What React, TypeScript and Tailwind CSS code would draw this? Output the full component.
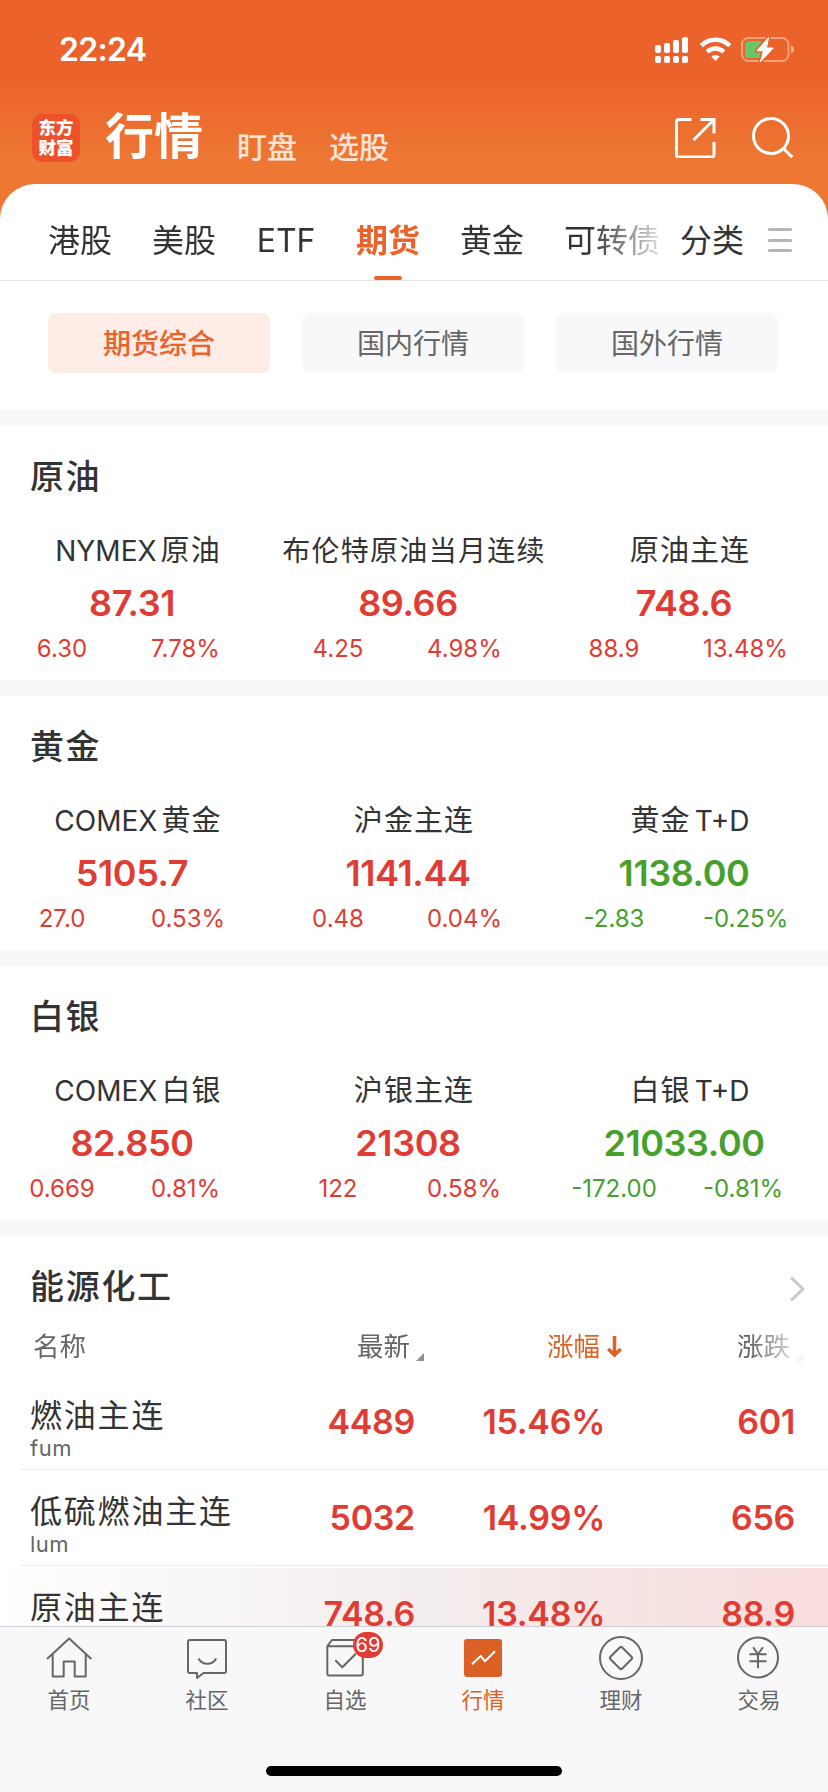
import type { ReactNode } from "react";

type Quote = {
  latin?: string;
  name: string;
  suffix?: string;
  value: string;
  change: string;
  percent: string;
  down?: boolean;
};

type Section = {
  title: string;
  quotes: Quote[];
};

const sections: Section[] = [
  {
    title: "原油",
    quotes: [
      { latin: "NYMEX", name: "原油", value: "87.31", change: "6.30", percent: "7.78%" },
      { name: "布伦特原油当月连续", value: "89.66", change: "4.25", percent: "4.98%" },
      { name: "原油主连", value: "748.6", change: "88.9", percent: "13.48%" },
    ],
  },
  {
    title: "黄金",
    quotes: [
      { latin: "COMEX", name: "黄金", value: "5105.7", change: "27.0", percent: "0.53%" },
      { name: "沪金主连", value: "1141.44", change: "0.48", percent: "0.04%" },
      { name: "黄金", suffix: "T+D", value: "1138.00", change: "-2.83", percent: "-0.25%", down: true },
    ],
  },
  {
    title: "白银",
    quotes: [
      { latin: "COMEX", name: "白银", value: "82.850", change: "0.669", percent: "0.81%" },
      { name: "沪银主连", value: "21308", change: "122", percent: "0.58%" },
      { name: "白银", suffix: "T+D", value: "21033.00", change: "-172.00", percent: "-0.81%", down: true },
    ],
  },
];

const energyRows = [
  { name: "燃油主连", code: "fum", price: "4489", percent: "15.46%", change: "601" },
  { name: "低硫燃油主连", code: "lum", price: "5032", percent: "14.99%", change: "656" },
  { name: "原油主连", price: "748.6", percent: "13.48%", change: "88.9", flash: true },
];

function StatusBar() {
  return (
    <div className="flex h-[98px] items-center justify-between pl-[59px] pr-[34px] text-white">
      <span className="mt-px text-[32px] font-semibold leading-none tracking-[-0.7px]">22:24</span>
      <svg className="h-[28px] w-[139px]" viewBox="0 0 139 28" fill="none">
        <g fill="#fff">
          <rect x="0" y="10" width="6" height="8" rx="2" />
          <rect x="9" y="8" width="6" height="10" rx="2" />
          <rect x="18" y="5" width="6" height="13" rx="2" />
          <rect x="27" y="2" width="6" height="16" rx="2" />
          <rect x="0" y="21" width="6" height="7" rx="2" />
          <rect x="9" y="21" width="6" height="7" rx="2" />
          <rect x="18" y="21" width="6" height="7" rx="2" />
          <rect x="27" y="21" width="6" height="7" rx="2" />
        </g>
        <path d="M46.3 10.6a20.3 20.3 0 0 1 28.400 0" stroke="#fff" strokeWidth="4.6" />
        <path d="M52.2 16.9a12 12 0 0 1 16.600 0" stroke="#fff" strokeWidth="4.4" />
        <path d="M56.3 21.600a6.200 6.200 0 0 1 8.400 0L60.500 26z" fill="#fff" />
        <rect x="87" y="3" width="46.500" height="23" rx="6.500" stroke="#fff" strokeOpacity=".4" strokeWidth="2" />
        <path d="M136 10.500c1.800.6 3 2.100 3 3.900s-1.200 3.300-3 3.900z" fill="#fff" fillOpacity=".5" />
        <rect x="90" y="6" width="17" height="17" rx="3.500" fill="#67C667" />
        <path
          d="M113.500 2.500 102 15.800h6.500l-3 10.700L118.300 13h-6.800z"
          fill="#fff"
          stroke="#EC622B"
          strokeWidth="4"
          paintOrder="stroke"
          strokeLinejoin="round"
        />
        <path d="M113.500 2.500 102 15.800h6.500l-3 10.700L118.300 13h-6.800z" fill="#fff" stroke="#fff" strokeLinejoin="round" />
      </svg>
    </div>
  );
}

function Header() {
  return (
    <div className="flex h-[86px] items-start pl-8 pr-[34px] pt-px text-white">
      <div className="mt-[15px] flex h-12 w-12 flex-col items-center justify-center rounded-[10px] bg-[#ED512A] text-[17.500px] font-black leading-[20px]">
        <span>东方</span>
        <span>财富</span>
      </div>
      <h1 className="ml-[25px] mt-[13px] text-[49px] font-bold leading-[50px]">行情</h1>
      <span className="ml-[34px] mt-[33px] text-[30px] font-medium leading-[30px] text-white/80">盯盘</span>
      <span className="ml-[32px] mt-[33px] text-[30px] font-medium leading-[30px] text-white/80">选股</span>
      <div className="ml-auto mt-[17px] flex gap-9">
        <svg className="h-[42px] w-[42px]" viewBox="0 0 42 42" fill="none" stroke="#fff" strokeWidth="3">
          <path d="M17.500 3.500H5A2.500 2.500 0 0 0 2.500 6v32.500A2.500 2.500 0 0 0 5 41h32.500a2.500 2.500 0 0 0 2.500-2.500V26" />
          <path d="M26.500 3.500h13.500V17.500M39 4.500 19.500 24" />
        </svg>
        <svg className="h-[42px] w-[42px]" viewBox="0 0 42 42" fill="none" stroke="#fff" strokeWidth="3">
          <circle cx="19" cy="20" r="17.500" />
          <path d="m31.500 32.500 8.800 8.800" />
        </svg>
      </div>
    </div>
  );
}

function CategoryTabs() {
  return (
    <div className="flex h-[97px] border-b border-[#E3E3E3] text-[32px] leading-[48px] text-[#333]">
      <div className="flex w-[664px] gap-10 overflow-hidden whitespace-nowrap pl-12 pt-[33px] [mask-image:linear-gradient(to_right,#000_590px,transparent_674px)]">
        <span>港股</span>
        <span>美股</span>
        <span className="w-[60px] text-center">ETF</span>
        <span className="flex flex-col items-center font-bold text-[#EC622B]">
          期货
          <i className="mt-[11px] h-1 w-7 rounded-full bg-[#EC622B]" />
        </span>
        <span>黄金</span>
        <span>可转债</span>
      </div>
      <span className="ml-4 pt-[33px]">分类</span>
      <div className="ml-6 mt-11 flex h-6 w-6 flex-col justify-between">
        <i className="h-[3px] rounded-full bg-[#B5B5B5]" />
        <i className="h-[3px] rounded-full bg-[#B5B5B5]" />
        <i className="h-[3px] rounded-full bg-[#B5B5B5]" />
      </div>
    </div>
  );
}

function FilterChips() {
  return (
    <div className="flex h-[129px] gap-8 px-12 pt-8 text-[28px]">
      <button className="h-[60px] w-[222px] rounded-lg bg-[#FDEDE6] pt-0.5 font-medium text-[#EC622B]">期货综合</button>
      <button className="h-[60px] w-[222px] rounded-lg bg-[#F8F8FA] pt-0.5 text-[#666]">国内行情</button>
      <button className="h-[60px] w-[222px] rounded-lg bg-[#F8F8FA] pt-0.5 text-[#666]">国外行情</button>
    </div>
  );
}

function QuoteCell({ quote }: { quote: Quote }) {
  return (
    <div className={quote.down ? "text-[#46A02C]" : "text-[#E03C34]"}>
      <div className="flex h-10 items-center justify-center gap-1 whitespace-nowrap text-[28px] text-[#333]">
        {quote.latin ? <span>{quote.latin}</span> : null}
        <span className={quote.name.length > 8 ? "tracking-[1.300px]" : "text-[29px] tracking-[1.100px]"}>{quote.name}</span>
        {quote.suffix ? <span>{quote.suffix}</span> : null}
      </div>
      <div className="mt-2 w-[264px] text-center text-[36px] font-semibold leading-[48px] tracking-[-0.400px]">{quote.value}</div>
      <div className="mt-1.5 flex text-[24px] leading-[32px]">
        <span className="w-[124px] text-center">{quote.change}</span>
        <span className="pl-[27px]">{quote.percent}</span>
      </div>
    </div>
  );
}

function QuoteSection({ section }: { section: Section }) {
  return (
    <section className="h-[270px] border-t-[16px] border-[#F7F8FA]">
      <h2 className="pl-[30px] pt-[26px] text-[34px] font-medium leading-[50px] tracking-[1.500px] text-[#333]">{section.title}</h2>
      <div className="mt-[29px] grid grid-cols-3">
        {section.quotes.map((quote) => (
          <QuoteCell key={quote.value} quote={quote} />
        ))}
      </div>
    </section>
  );
}

function SortMark() {
  return (
    <svg className="mb-1.5 h-2 w-2 self-end" viewBox="0 0 8 8">
      <path d="M8 0v8H0z" fill="#8E8E93" />
    </svg>
  );
}

function EnergySection() {
  return (
    <section className="border-t-[16px] border-[#F7F8FA]">
      <div className="flex items-center justify-between pl-[30px] pr-[22px] pt-[26px]">
        <h2 className="text-[34px] font-medium leading-[50px] tracking-[1.700px] text-[#333]">能源化工</h2>
        <svg className="mt-1 h-7 w-4" viewBox="0 0 16 28" fill="none" stroke="#C8C8C8" strokeWidth="3">
          <path d="m1 2.500 12 11.500L1 25.500" />
        </svg>
      </div>

      <div className="mt-[15px] flex h-10 items-center text-[26.500px] text-[#666] [mask-image:linear-gradient(to_right,#000_750px,transparent_806px)]">
        <span className="w-[324px] pl-[33px]">名称</span>
        <span className="flex h-full w-[100px] items-center justify-between pl-[33px]">
          <span>最新</span>
          <SortMark />
        </span>
        <span className="flex w-[198px] items-center justify-end text-[#DB6426]">
          涨幅
          <svg className="ml-[7px] h-[22px] w-[15px]" viewBox="0 0 15 22" fill="none" stroke="#DB6426" strokeWidth="3.600">
            <path d="M7.500 0v19M1.200 13l6.300 6 6.300-6" />
          </svg>
        </span>
        <span className="flex h-full w-[182px] items-center justify-end gap-1.5">
          <span>涨跌</span>
          <SortMark />
        </span>
      </div>

      <div className="mt-[7px]">
        {energyRows.map((row) => (
          <div key={row.name} className="h-24">
            <div
              className={
                row.flash
                  ? "mt-[2px] flex h-[94px] bg-gradient-to-r from-white via-[#F3EDED] to-[#F9DDDC] pt-[11px]"
                  : "flex h-[95px] pt-[13px]"
              }
            >
              <div className="w-[244px] pl-[30px]">
                <div className="mt-[7px] whitespace-nowrap text-[32px] leading-[44px] tracking-[1.800px] text-[#333]">{row.name}</div>
                {row.code ? (
                  <div className="-mt-1 text-[22px] leading-[28px] tracking-[0.500px] text-[#666]">{row.code}</div>
                ) : null}
              </div>
              <div className="mt-[11px] flex text-right text-[34px] font-semibold leading-[48px] tracking-[-0.300px] text-[#E03C34]">
                <span className="w-[171px]">{row.price}</span>
                <span className="w-[190px]">{row.percent}</span>
                <span className="w-[190px]">{row.change}</span>
              </div>
            </div>
            {!row.flash && <div className="ml-5 h-px bg-[#EBEBEB]" />}
          </div>
        ))}
      </div>
    </section>
  );
}

function NavItem({ label, active, badge, children }: { label: string; active?: boolean; badge?: string; children: ReactNode }) {
  return (
    <div className={active ? "relative w-[138px] text-center text-[#DB6026]" : "relative w-[138px] text-center text-[#666]"}>
      <svg
        className="mx-auto mt-[5px] h-12 w-12"
        viewBox="0 0 48 48"
        fill="none"
        stroke="currentColor"
        strokeWidth="2"
        strokeLinejoin="round"
      >
        {children}
      </svg>
      <div className="mt-[5px] text-[21.500px] leading-[30px]">{label}</div>
      {badge ? (
        <span className="absolute left-[77px] top-[5px] h-[26px] w-[30px] rounded-full bg-[#E03C34] text-[20px] leading-[26px] text-white">
          {badge}
        </span>
      ) : null}
    </div>
  );
}

function BottomNav() {
  return (
    <nav className="h-[166px] shrink-0 border-t border-[#CFD0D5] bg-[#F8F8FA]">
      <div className="flex">
        <NavItem label="首页">
          <path d="M2 27 24.200 6.500 46.300 27" />
          <path d="M7.700 22.500v22h11v-15h11v15h11v-22" />
        </NavItem>
        <NavItem label="社区">
          <path d="M7 8h34a2 2 0 0 1 2 2v29a2 2 0 0 1-2 2H20.500L14 46v-5H7a2 2 0 0 1-2-2V10a2 2 0 0 1 2-2z" />
          <path d="M15.500 26.500c3.800 7 14 7 17.700 0" />
        </NavItem>
        <NavItem label="自选" badge="69">
          <path d="M6.300 14.200h35.500v27.300a2 2 0 0 1-2 2H8.300a2 2 0 0 1-2-2zL11 8h26l4.800 6.200" />
          <path d="m14.300 28.300 7 7 13.500-13.500" />
        </NavItem>
        <NavItem label="行情" active>
          <rect x="5" y="7" width="38" height="38" rx="3" fill="currentColor" stroke="none" />
          <path d="m13 32.300 8.700-8.300 4.300 5.300 10-10" stroke="#fff" />
        </NavItem>
        <NavItem label="理财">
          <circle cx="24" cy="26" r="21" />
          <path d="M22.800 15.500a1.700 1.700 0 0 1 2.400 0l9.300 9.300a1.700 1.700 0 0 1 0 2.400l-9.300 9.300a1.700 1.700 0 0 1-2.400 0l-9.300-9.300a1.700 1.700 0 0 1 0-2.400z" />
        </NavItem>
        <NavItem label="交易">
          <circle cx="23" cy="25.500" r="20" />
          <path d="M18.200 15.200 23 22.300l4.900-7.100M14.500 22.300h17M14.500 29.300h17M23 22.300v14" />
        </NavItem>
      </div>
      <div className="mx-auto mt-[51px] h-2.5 w-[296px] rounded-full bg-black" />
    </nav>
  );
}

export default function App() {
  return (
    <div className="flex h-[1792px] w-[828px] flex-col overflow-hidden bg-[linear-gradient(to_bottom,#EC622B_75px,#ED7733_160px)] font-[Inter,'Noto_Sans_CJK_SC',sans-serif]">
      <StatusBar />
      <Header />
      <main className="min-h-0 flex-1 overflow-hidden rounded-t-[35px] bg-white">
        <CategoryTabs />
        <FilterChips />
        {sections.map((section) => (
          <QuoteSection key={section.title} section={section} />
        ))}
        <EnergySection />
      </main>
      <BottomNav />
    </div>
  );
}
